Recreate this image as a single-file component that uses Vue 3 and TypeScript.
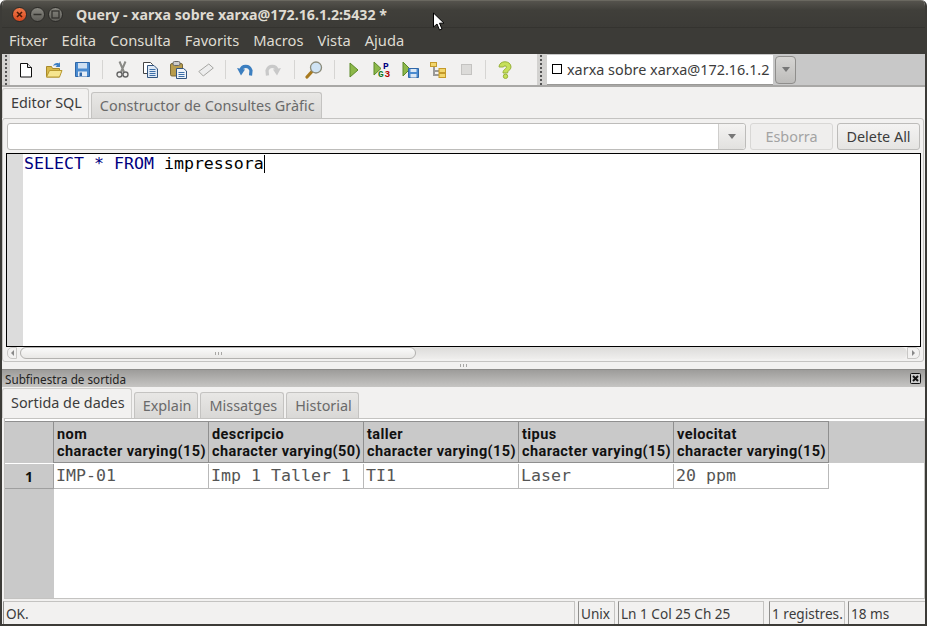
<script setup lang="ts">
const menus = ['Fitxer', 'Edita', 'Consulta', 'Favorits', 'Macros', 'Vista', 'Ajuda']
const outTabs = ['Explain', 'Missatges', 'Historial']
const columns = [
  { name: 'nom', type: 'character varying(15)', value: 'IMP-01' },
  { name: 'descripcio', type: 'character varying(50)', value: 'Imp 1 Taller 1' },
  { name: 'taller', type: 'character varying(15)', value: 'TI1' },
  { name: 'tipus', type: 'character varying(15)', value: 'Laser' },
  { name: 'velocitat', type: 'character varying(15)', value: '20 ppm' },
]
</script>

<template>
  <div class="window">
    <header class="titlebar">
      <div class="wm-buttons">
        <span class="wm close"><svg width="9" height="9" viewBox="0 0 9 9"><path d="M2 2l5 5M7 2l-5 5" stroke="#4a1a08" stroke-width="1.600"/></svg></span>
        <span class="wm"><svg width="9" height="9" viewBox="0 0 9 9"><path d="M0.500 4.500h8" stroke="#33322e" stroke-width="1.500"/></svg></span>
        <span class="wm"><svg width="9" height="9" viewBox="0 0 9 9"><rect x="1" y="1" width="7" height="7" fill="none" stroke="#33322e" stroke-width="1.300"/></svg></span>
      </div>
      <span class="title">Query - xarxa sobre xarxa@172.16.1.2:5432 *</span>
    </header>
    <nav class="menubar">
      <span v-for="m in menus" :key="m" class="menu">{{ m }}</span>
    </nav>

    <div class="toolbars">
      <div class="toolbar main-tb">
        <span class="grip"></span>
        <span class="slot first"><svg width="14" height="16" viewBox="0 0 14 16"><path d="M1.500 1.500h7l4 4v9.500h-11z" fill="#fff" stroke="#111"/><path d="M8.500 1.500v4h4" fill="#ddd" stroke="#111"/></svg></span>
        <span class="slot"><svg width="18" height="18" viewBox="0 0 18 18"><path d="M1.500 5.500h5l1 2h7v8.500h-13z" fill="#d8b94a" stroke="#a8892a"/><path d="M1.500 16l3-6.500h12.500l-2.500 6.500z" fill="#f6e58f" stroke="#b8992f"/><path d="M8 5c1-2.500 3.500-3.500 6-2.500l1-1.500v5h-4.500l1.500-1.500c-1.500-.5-3-.5-4 .5z" fill="#3d7fc4"/></svg></span>
        <span class="slot"><svg width="15" height="15" viewBox="0 0 15 15"><path d="M.5.500h14v14h-14z" fill="#4a8bd0" stroke="#2f67a8"/><rect x="3" y="1" width="9" height="5.500" fill="#cfe0f2"/><rect x="3" y="9.500" width="9" height="5" fill="#e8eef6"/><rect x="4.500" y="10.500" width="2.500" height="3.500" fill="#2f67a8"/></svg></span>
        <i class="sep m6"></i>
        <span class="slot"><svg width="13" height="17" viewBox="0 0 13 17"><path d="M3.500 .5l4.500 10.500M9.500 .5l-4.500 10.500" stroke="#8a8a86" stroke-width="2" fill="none"/><circle cx="3.500" cy="13.500" r="2.500" fill="#f2f1f0" stroke="#666" stroke-width="1.400"/><circle cx="9.500" cy="13.500" r="2.500" fill="#f2f1f0" stroke="#666" stroke-width="1.400"/></svg></span>
        <span class="slot"><svg width="15" height="16" viewBox="0 0 15 16"><path d="M.5.500h7l2 2v9h-9z" fill="#fff" stroke="#444"/><path d="M4.500 3.500h6.500l3.500 3.500v8.500h-10z" fill="#dfe9f5" stroke="#33557f"/><path d="M6.500 7.500h6M6.500 9.500h6M6.500 11.500h6M6.500 13.500h6" stroke="#3d6fa8"/></svg></span>
        <span class="slot"><svg width="17" height="18" viewBox="0 0 17 18"><rect x=".5" y="2.500" width="12" height="12.500" rx="1.500" fill="#b89c4c" stroke="#7a6a3a"/><rect x="3" y=".5" width="7" height="4" rx="1.500" fill="#ccc" stroke="#666"/><path d="M6.500 7.500h7l3 2.500v7.500h-10z" fill="#eef3f9" stroke="#33557f"/><path d="M8.500 11.500h6M8.500 13.500h6M8.500 15.500h6" stroke="#3d6fa8"/></svg></span>
        <span class="slot"><svg width="16" height="14" viewBox="0 0 16 14"><path d="M.8 8.500l10-7.500 4.500 4-10 8z" fill="#ededed" stroke="#a5a5a2" stroke-linejoin="round"/></svg></span>
        <i class="sep"></i>
        <span class="slot"><svg width="16" height="14" viewBox="0 0 16 14"><path d="M4 7C5 2.500 12 1.500 14 7.500l-.5 5" fill="none" stroke="#3c7fc0" stroke-width="3.200"/><path d="M0 5l8 1.500-4 6z" fill="#3c7fc0"/></svg></span>
        <span class="slot"><svg width="16" height="14" viewBox="0 0 16 14"><path d="M12 7C11 2.500 4 1.500 2 7.500l.5 5" fill="none" stroke="#c9c9c9" stroke-width="3.200"/><path d="M16 5l-8 1.500 4 6z" fill="#c9c9c9"/></svg></span>
        <i class="sep m7"></i>
        <span class="slot"><svg width="18" height="18" viewBox="0 0 18 18"><path d="M6.500 11l-4.500 5" stroke="#a87a1f" stroke-width="3.200" stroke-linecap="round"/><circle cx="11" cy="6.500" r="5.500" fill="#cfe3f5" stroke="#8b8b7a" stroke-width="1.300"/></svg></span>
        <i class="sep m6"></i>
        <span class="slot"><svg width="10" height="16" viewBox="0 0 10 16"><path d="M1 1l8 7-8 7z" fill="#8db84a" stroke="#5c8a28"/></svg></span>
        <span class="slot"><svg width="18" height="18" viewBox="0 0 18 18"><path d="M1 1l7 6.500-7 6.500z" fill="#8db84a" stroke="#5c8a28"/><text x="10" y="7.500" class="mini navy">P</text><text x="5" y="16" class="mini green">G</text><text x="11.500" y="16" class="mini red">3</text></svg></span>
        <span class="slot"><svg width="17" height="17" viewBox="0 0 17 17"><path d="M1 1l7 7-7 7z" fill="#8db84a" stroke="#5c8a28"/><path d="M6.500 7.500h10v9h-10z" fill="#4a8bd0" stroke="#2f67a8"/><rect x="8.500" y="8" width="6" height="3" fill="#dbe7f4"/><rect x="8.500" y="13" width="6" height="3.500" fill="#dbe7f4"/></svg></span>
        <span class="slot"><svg width="16" height="16" viewBox="0 0 16 16"><path d="M4 5v8h5M4 9h5" stroke="#999" stroke-width="2" fill="none"/><rect x=".5" y=".5" width="6" height="4" fill="#f2d66c" stroke="#c59a2a"/><rect x="9" y="6.500" width="6.500" height="4" fill="#f2d66c" stroke="#c59a2a"/><rect x="9" y="11.500" width="6.500" height="4" fill="#f2d66c" stroke="#c59a2a"/></svg></span>
        <span class="slot"><svg width="11" height="11" viewBox="0 0 11 11"><rect x=".5" y=".5" width="10" height="10" fill="#dcdbd9" stroke="#c4c3c1"/></svg></span>
        <i class="sep"></i>
        <span class="slot"><svg width="14" height="18" viewBox="0 0 14 18"><path d="M1 6c0-7 12-7 12 0 0 3-3.500 3.500-3.500 6h-4.500c0-4 3.500-4 3.500-6 0-1.500-3-1.500-3 0z" fill="#c6e05a" stroke="#98b13a"/><circle cx="7.500" cy="15.300" r="2.200" fill="#c6e05a" stroke="#98b13a"/></svg></span>
      </div>
      <div class="toolbar conn-tb">
        <span class="grip"></span>
        <div class="conn-field"><i class="check"></i><span>xarxa sobre xarxa@172.16.1.2</span></div>
        <span class="conn-arrow"><i class="tri"></i></span>
      </div>
    </div>

    <div class="tabs top-tabs">
      <span class="tab active">Editor SQL</span>
      <span class="tab">Constructor de Consultes Gràfic</span>
    </div>

    <section class="editor-panel">
      <div class="history">
        <div class="combo"><span class="combo-text"></span><span class="combo-arrow"><i class="tri"></i></span></div>
        <span class="btn disabled">Esborra</span>
        <span class="btn">Delete All</span>
      </div>
      <div class="editor">
        <div class="margin"></div>
        <div class="code"><span class="kw">SELECT</span> <span class="kw">*</span> <span class="kw">FROM</span> impressora<i class="caret"></i></div>
      </div>
      <div class="hscroll">
        <span class="sb-arrow left"><i class="tri-l"></i></span>
        <div class="sb-track">
          <div class="sb-thumb"><i class="thumb-grip"></i></div>
        </div>
        <span class="sb-arrow right"><i class="tri-r"></i></span>
      </div>
    </section>

    <div class="splitter"><i class="split-grip"></i></div>

    <div class="dock-title">
      <span>Subfinestra de sortida</span>
      <svg width="11" height="11" viewBox="0 0 11 11"><rect x=".5" y=".5" width="10" height="10" rx="1" fill="#ccc" stroke="#111"/><path d="M3 3l5 5M8 3l-5 5" stroke="#111" stroke-width="2"/></svg>
    </div>

    <div class="tabs out-tabs">
      <span class="tab active">Sortida de dades</span>
      <span v-for="t in outTabs" :key="t" class="tab">{{ t }}</span>
    </div>

    <section class="grid-panel">
      <div class="grid-head">
        <div class="corner"></div>
        <div v-for="c in columns" :key="c.name" class="col-head"><b>{{ c.name }}</b><b>{{ c.type }}</b></div>
        <div class="head-rest"></div>
      </div>
      <div class="grid-row">
        <div class="row-head">1</div>
        <div v-for="c in columns" :key="c.name" class="cell">{{ c.value }}</div>
      </div>
      <div class="grid-empty"><div class="gutter"></div></div>
    </section>

    <footer class="statusbar">
      <span class="st st-main">OK.</span>
      <span class="st st-unix">Unix</span>
      <span class="st st-pos">Ln 1 Col 25 Ch 25</span>
      <span class="st st-rows">1 registres.</span>
      <span class="st st-time">18 ms</span>
    </footer>

    <svg class="pointer" width="14" height="20" viewBox="0 0 14 20"><path d="M1.500 1v14l3.500-3 2.500 6 2.500-1-2.500-5.800h4.500z" fill="#fff" stroke="#000"/></svg>
  </div>
</template>

<style>
html, body { margin: 0; background: #fff; overflow: hidden; }
</style>

<style scoped>
.window {
  position: relative;
  width: 927px;
  height: 626px;
  box-sizing: border-box;
  background: #f2f1f0;
  border-right: 2px solid #3c3b37;
  border-left: 2px solid #3c3b37;
  border-bottom: 2px solid #3c3b37;
  border-radius: 6px 6px 0 0;
  display: flex;
  flex-direction: column;
  font-family: "Noto Sans", "Open Sans", sans-serif;
  font-size: 14.400px;
  color: #3c3c3c;
  overflow: hidden;
}
.titlebar {
  height: 28px;
  margin: 0 -2px;
  flex: none;
  display: flex;
  align-items: center;
  background: linear-gradient(#55534d, #403f3a 35%, #3c3b37);
  border-top: 1px solid #6a6860;
  border-bottom: 1px solid #34332f;
  box-sizing: border-box;
}
.wm-buttons { display: flex; gap: 3px; margin-left: 12px; width: 64px; }
.wm {
  width: 15px; height: 15px; border-radius: 50%;
  display: flex; align-items: center; justify-content: center;
  box-sizing: border-box;
  background: linear-gradient(#87867f, #5f5e59);
  border: 1px solid #2b2a27;
}
.wm.close { background: linear-gradient(#f07a4a, #d8481f); }
.title { color: #dfdbd2; font-weight: 700; font-size: 14.200px; }
.menubar {
  height: 26px;
  margin: 0 -2px;
  flex: none;
  display: flex;
  align-items: center;
  gap: 14px;
  padding: 0 0 2px 9px;
  box-sizing: border-box;
  background: #3c3b37;
}
.menu { color: #dfdbd2; font-size: 14.700px; }

.toolbars {
  height: 33px;
  flex: none;
  display: flex;
  border-bottom: 2px solid #a9a8a6;
  box-sizing: border-box;
  background: #c8c8c8;
}
.toolbar { display: flex; align-items: center; }
.main-tb { width: 535px; background: #f2f1f0; flex: none; }
.grip {
  align-self: stretch;
  width: 8px;
  flex: none;
  background-color: #d3d2d0;
  background-image: radial-gradient(circle at 2px 2px, #555 0 1px, transparent 1.200px);
  background-size: 8px 4px;
  background-position: 2px 4px;
  background-repeat: repeat-y;
}
.slot { width: 28px; flex: none; display: flex; align-items: center; justify-content: center; }
.slot.first { margin-left: 2px; }
.sep { width: 1px; height: 19px; background: #d6d5d3; margin: 0 5px; flex: none; }
.sep.m6 { margin-left: 6px; }
.sep.m7 { margin-left: 7px; }
.mini { font-family: "Liberation Mono", monospace; font-size: 9.500px; font-weight: 700; }
.navy { fill: #000080; }
.green { fill: #0a7a1c; }
.red { fill: #b00000; }
.conn-tb { flex: none; }
.conn-tb .grip { width: 10px; }
.conn-field {
  width: 226px;
  height: 30px;
  background: #fff;
  display: flex;
  align-items: center;
  gap: 5px;
  box-sizing: border-box;
  padding-left: 5px;
  border-bottom: 1px solid #9a9997;
  white-space: nowrap;
}
.check { width: 10px; height: 10px; box-sizing: border-box; border: 1px solid #000; flex: none; }
.conn-arrow {
  width: 21px;
  height: 28px;
  margin-left: 2px;
  box-sizing: border-box;
  border: 1px solid #8f8e8c;
  border-radius: 4px;
  background: linear-gradient(#d6d5d3, #bdbcba);
  display: flex; align-items: center; justify-content: center;
}
.tri { width: 0; height: 0; border: 4px solid transparent; border-top: 5px solid #777; border-bottom: 0; }

.tabs {
  display: flex;
  align-items: flex-end;
  flex: none;
  gap: 2px;
  height: 31px;
}
.tab {
  height: 26px;
  display: flex;
  align-items: center;
  padding: 0 6px 0 8px;
  box-sizing: border-box;
  border: 1px solid #c4c3c1;
  border-bottom: 0;
  border-radius: 3px 3px 0 0;
  background: linear-gradient(#e8e7e5, #d9d8d6);
  color: #6a6a6a;
}
.tab.active {
  height: 30px;
  padding-bottom: 2px;
  background: #f2f1f0;
  color: #3c3c3c;
  border-color: #cfcecc;
}
.editor-panel {
  flex: none;
  margin: 0 1px 0 0;
  box-sizing: border-box;
  border: 1px solid #c4c3c1;
  border-radius: 3px;
  padding: 4px 3px 0 4px;
  display: flex;
  flex-direction: column;
}
.history { height: 30px; flex: none; display: flex; gap: 4px; }
.combo {
  width: 739px;
  display: flex;
  height: 27px;
  box-sizing: border-box;
  background: #fff;
  border: 1px solid #bdbcba;
  border-radius: 3px;
}
.combo-text { flex: 1; border-right: 1px solid #cfcecc; }
.combo-arrow {
  width: 26px;
  display: flex; align-items: center; justify-content: center;
  background: linear-gradient(#f4f3f2, #e2e1df);
  border-radius: 0 3px 3px 0;
}
.btn {
  height: 27px;
  box-sizing: border-box;
  display: flex; align-items: center; justify-content: center;
  border: 1px solid #bdbcba;
  border-radius: 3px;
  background: linear-gradient(#f4f3f2, #e5e4e2);
  width: 83px;
}
.btn.disabled { color: #a3a3a3; background: #efeeed; border-color: #d8d7d5; }
.editor {
  width: 915px;
  margin-left: -1px;
  height: 194px;
  flex: none;
  display: flex;
  box-sizing: border-box;
  border: 1px solid #000;
  background: #fff;
}
.margin { width: 16px; background: #dcdcdc; flex: none; }
.code {
  font-family: "DejaVu Sans Mono", monospace;
  font-size: 16.600px;
  line-height: 19px;
  padding-left: 1px;
  color: #000;
  white-space: pre;
}
.kw { color: #00007f; }
.caret { display: inline-block; width: 1px; height: 18px; background: #000; vertical-align: -4px; }
.hscroll { height: 14px; flex: none; display: flex; align-items: flex-start; }
.sb-arrow {
  height: 12px;
  display: flex; align-items: center; justify-content: center;
  flex: none;
  box-sizing: border-box;
  border: 1px solid #c8c7c5;
  background: #f2f1f0;
}
.sb-arrow.left { width: 10px; margin-right: 3px; border-radius: 5px 0 0 5px; }
.sb-arrow.right { width: 13px; border-radius: 0 5px 5px 0; }
.tri-l { border: 3px solid transparent; border-right: 3px solid #888; border-left: 0; }
.tri-r { border: 3px solid transparent; border-left: 3px solid #888; border-right: 0; }
.sb-track {
  width: 887px;
  height: 12px;
  flex: none;
  display: flex;
  align-items: center;
  background: linear-gradient(#dcdbd9, #efeeed);
  border-radius: 6px;
}
.sb-thumb {
  width: 396px;
  height: 12px;
  box-sizing: border-box;
  border: 1px solid #b3b2b0;
  border-radius: 6px;
  background: linear-gradient(#fafafa, #e9e8e6);
  display: flex; align-items: center; justify-content: center;
}
.thumb-grip, .split-grip {
  width: 7px; height: 3px;
  background: repeating-linear-gradient(90deg, #a8a7a5 0 1px, transparent 1px 3px);
}
.splitter { height: 7px; flex: none; display: flex; justify-content: center; align-items: center; padding-bottom: 1px; box-sizing: border-box; }
.dock-title {
  height: 18px;
  flex: none;
  display: flex;
  align-items: center;
  justify-content: space-between;
  padding: 0 4px 0 3px;
  background: linear-gradient(#9d9c9a, #c6c5c3);
  border-top: 1px solid #8d8c8a;
  box-sizing: border-box;
  font-size: 11.700px;
  color: #222;
}
.grid-panel {
  height: 181px;
  flex: none;
  margin-left: 2px;
  padding-top: 2px;
  box-sizing: border-box;
  border: 1px solid #c4c3c1;
  display: flex;
  flex-direction: column;
  background: #fff;
}
.grid-head { display: flex; height: 43px; flex: none; background: #c9c9c9; border-bottom: 1px solid #fff; box-sizing: border-box; }
.corner { width: 49px; flex: none; border: 1px solid #8f8f8f; border-left: 0; border-bottom: 0; box-sizing: border-box; }
.col-head {
  width: 155px;
  flex: none;
  box-sizing: border-box;
  border: 1px solid #8f8f8f;
  border-left: 0;
  padding: 4px 0 0 3px;
  display: flex;
  flex-direction: column;
  color: #111;
  line-height: 17px;
  font-family: Roboto, "Noto Sans", sans-serif;
  font-size: 14.500px;
  letter-spacing: 0.420px;
  white-space: nowrap;
  overflow: hidden;
}
.head-rest { flex: 1; }
.grid-row { display: flex; height: 25px; flex: none; font-family: "DejaVu Sans Mono", monospace; font-size: 16.600px; line-height: 20px; }
.row-head {
  width: 49px; flex: none;
  background: #c9c9c9;
  border: 1px solid #9f9f9f;
  border-left: 0;
  border-top: 0;
  box-sizing: border-box;
  display: flex; align-items: center; justify-content: center;
  padding-top: 1px;
  font-family: "Noto Sans", sans-serif;
  font-weight: 700;
  font-size: 14px;
  color: #111;
}
.cell {
  width: 155px; flex: none;
  box-sizing: border-box;
  border-right: 1px solid #b9b9b9;
  border-bottom: 1px solid #b9b9b9;
  padding: 2px 0 0 2px;
  color: #555;
  white-space: pre;
}
.grid-empty { flex: 1; display: flex; }
.gutter { width: 49px; background: #c9c9c9; }
.statusbar {
  height: 25px;
  flex: none;
  display: flex;
  gap: 3px;
  padding: 2px 0 0 1px;
  box-sizing: border-box;
  font-size: 13.600px;
}
.st { display: flex; align-items: center; padding-left: 2px; box-sizing: border-box; border: 1px solid #c4c3c1; border-left-color: #8f8e8c; border-bottom: 0; white-space: nowrap; overflow: hidden; }
.st-main { width: 572px; }
.st-unix { width: 37px; }
.st-pos { width: 146px; margin-right: 2px; }
.st-rows { width: 76px; }
.st-time { width: 77px; border-right: 0; }
.pointer { position: absolute; left: 430px; top: 12px; }
</style>
